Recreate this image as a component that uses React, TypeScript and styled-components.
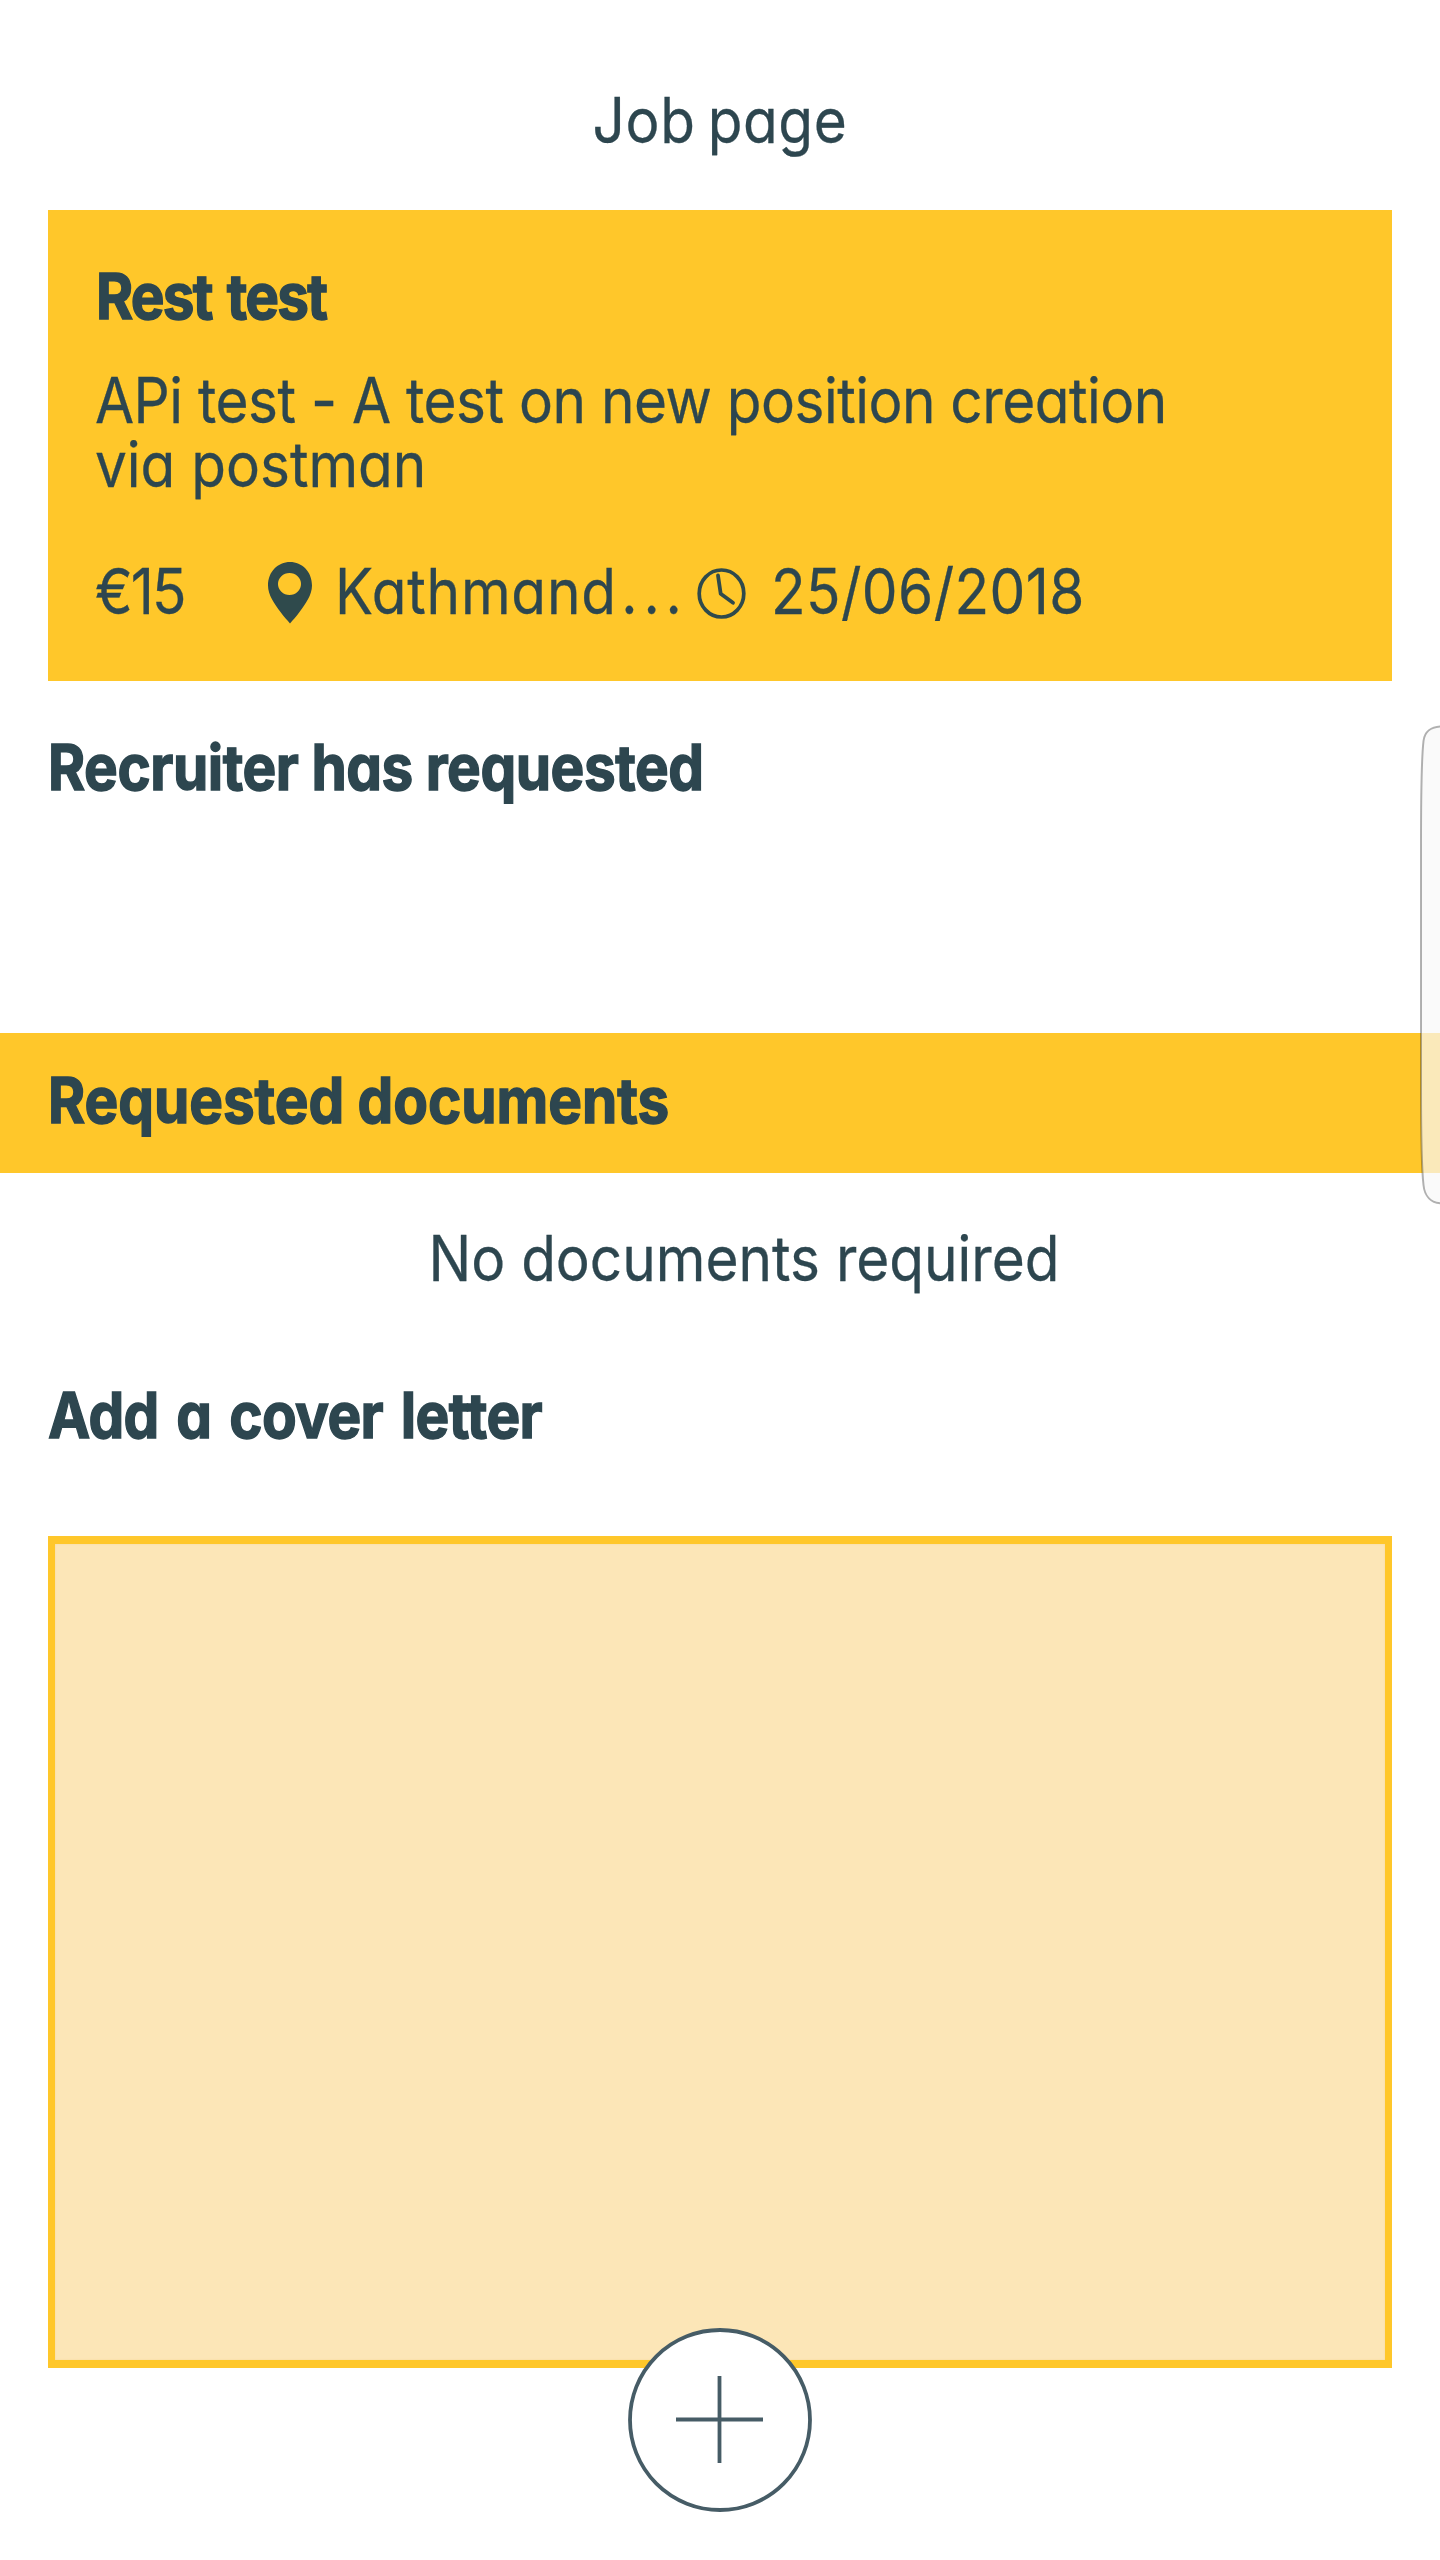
import React from "react";
import styled, { createGlobalStyle } from "styled-components";

const ink = "#2d464f";
const amber = "#ffc72a";

const GlobalStyle = createGlobalStyle`
  *, *::before, *::after { box-sizing: border-box; }
  body { margin: 0; background: #fff; }
`;

const Page = styled.div`
  position: relative;
  display: flex;
  flex-direction: column;
  width: 1440px;
  height: 2560px;
  overflow: hidden;
  background: #fff;
  color: ${ink};
  font-family: Inter, "Noto Sans", sans-serif;
  font-size: 63px;
  line-height: 64px;
  font-feature-settings: "cv11";
`;

const Label = styled.span<{ $track?: number; $gap?: number; $bold?: boolean; $centered?: boolean }>`
  display: block;
  margin-left: ${(p) => (p.$centered || p.$bold ? 0 : -1)}px;
  white-space: nowrap;
  font-weight: ${(p) => (p.$bold ? 700 : 400)};
  -webkit-text-stroke: ${(p) => (p.$bold ? 1.4 : 0.3)}px ${ink};
  letter-spacing: ${(p) => p.$track ?? 0}px;
  word-spacing: ${(p) => p.$gap ?? 0}px;
  text-align: ${(p) => (p.$centered ? "center" : "left")};
  transform: scaleX(0.9);
  transform-origin: ${(p) => (p.$centered ? "center" : "left")} center;
`;

const Header = styled.header`
  padding: 88px 0 58px;
`;

const JobCard = styled.section`
  margin: 0 48px;
  height: 471px;
  padding: 54px 48px 0;
  background: ${amber};
`;

const Description = styled.div`
  margin-top: 40px;
`;

const Meta = styled.div`
  display: grid;
  grid-template-columns: 172px 68px 361px 75px 1fr;
  margin-top: 63px;
  height: 64px;
`;

const Dots = styled.span`
  letter-spacing: 6.5px;
  margin-left: 5px;
`;

const PinIcon = styled.svg`
  display: block;
  width: 44px;
  height: 62px;
  margin-top: 3px;
`;

const ClockIcon = styled.svg`
  display: block;
  width: 51px;
  height: 51px;
  margin-top: 9px;
`;

const Requested = styled.section`
  padding: 54px 48px 0;
  height: 352px;
`;

const Band = styled.div`
  height: 140px;
  padding: 35px 48px 0;
  background: ${amber};
`;

const Documents = styled.div`
  padding: 53px 0 0 48px;
  height: 210px;
`;

const CoverLetter = styled.section`
  padding: 0 48px;
`;

const LetterBox = styled.div`
  height: 832px;
  margin-top: 89px;
  border: solid ${amber};
  border-width: 8px 7px;
  background: #fce6b7;
  box-shadow: inset 0 0 2px #f3d998;
`;

const AddButton = styled.button`
  position: absolute;
  left: 628px;
  top: 2328px;
  width: 184px;
  height: 184px;
  padding: 0;
  border: 0;
  background: none;
`;

const EdgeHandle = styled.svg`
  position: absolute;
  left: 1418px;
  top: 724px;
  width: 22px;
  height: 482px;
`;

export default function App() {
  return (
    <>
      <GlobalStyle />
      <Page>
        <Header>
          <Label $centered $track={0.7} $gap={-5}>Job page</Label>
        </Header>
        <JobCard>
          <Label $bold $track={-2} $gap={4}>Rest test</Label>
          <Description>
            <Label $track={-0.56}>APi test - A test on new position creation</Label>
            <Label $track={0}>via postman</Label>
          </Description>
          <Meta>
            <Label $track={-2.2}>€15</Label>
            <PinIcon viewBox="0 0 44 62">
              <path
                fill="#2f4a4c"
                fillRule="evenodd"
                d="M22 0C34 0 44 9.500 44 23.500C44 33 37.500 42 31.500 50C28 54.800 24.500 58.500 22 61.500C19.500 58.500 16 54.800 12.500 50C6.500 42 0 33 0 23.500C0 9.500 10 0 22 0ZM21.500 11A11.500 11 0 1 0 21.500 33A11.500 11 0 1 0 21.500 11Z"
              />
            </PinIcon>
            <Label $track={0.9}>Kathmand<Dots>...</Dots></Label>
            <ClockIcon viewBox="0 0 51 51" fill="none" stroke="#2f4a4c">
              <ellipse cx="24.500" cy="25.500" rx="22.300" ry="23.500" strokeWidth="3.700" />
              <path d="M21 7.500L23.700 25.800L36 34.800" strokeWidth="3.800" strokeLinecap="round" strokeLinejoin="round" />
            </ClockIcon>
            <Label $track={0.5}>25/06/2018</Label>
          </Meta>
        </JobCard>
        <Requested>
          <Label $bold $track={-0.5}>Recruiter has requested</Label>
        </Requested>
        <Band>
          <Label $bold $track={-0.05}>Requested documents</Label>
        </Band>
        <Documents>
          <Label $centered>No documents required</Label>
        </Documents>
        <CoverLetter>
          <Label $bold $track={-0.7} $gap={5.5}>Add a cover letter</Label>
          <LetterBox />
        </CoverLetter>
        <AddButton aria-label="Add">
          <svg width="184" height="184" viewBox="0 0 184 184" stroke="#465c66" strokeWidth="3.800">
            <circle cx="92" cy="92" r="90" fill="#fff" />
            <path d="M48 91.500H135M91.500 48V135" />
          </svg>
        </AddButton>
        <EdgeHandle viewBox="0 0 22 482" fill="#f8f8f8" fillOpacity="0.7" stroke="#000" strokeOpacity="0.3" strokeWidth="2">
          <path d="M24 2.500C13 2.500 6.500 8 5.500 17C3.500 34 3 70 3 120V362C3 412 3.500 444 5.500 461C6.500 472 13 479 24 479.500" />
        </EdgeHandle>
      </Page>
    </>
  );
}
